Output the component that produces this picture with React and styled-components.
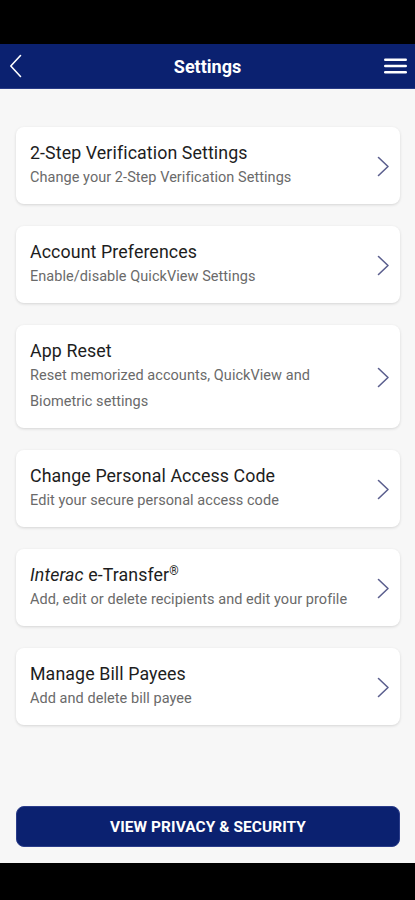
import React from "react";
import styled, { createGlobalStyle } from "styled-components";

const Global = createGlobalStyle`
  html, body { margin: 0; padding: 0; }
  body { font-family: Roboto, "Noto Sans", "Liberation Sans", sans-serif; background: #000; }
  * { box-sizing: border-box; }
`;

const NAVY = "#0b2170";

const Screen = styled.div`
  width: 415px;
  height: 900px;
  display: flex;
  flex-direction: column;
  background: #000;
  overflow: hidden;
`;

const SystemBar = styled.div`
  height: ${(p) => p.$h}px;
  flex: none;
  background: #000;
`;

const Header = styled.header`
  height: 45px;
  flex: none;
  background: ${NAVY};
  border-bottom: 1px solid #2a3c86;
  display: flex;
  align-items: center;
  justify-content: space-between;
  padding: 0 8px 0 8px;
  position: relative;
`;

const Title = styled.h1`
  margin: 0;
  position: absolute;
  left: 0;
  right: 0;
  text-align: center;
  color: #fff;
  font-size: 18px;
  font-weight: 700;
  pointer-events: none;
`;

const IconButton = styled.button`
  background: none;
  border: 0;
  padding: 0;
  display: flex;
  align-items: center;
  justify-content: center;
  width: ${(p) => p.$w}px;
  height: 30px;
  cursor: pointer;
`;

const Content = styled.main`
  flex: 1;
  background: #f7f7f7;
  display: flex;
  flex-direction: column;
  padding: 38px 15px 16px 16px;
`;

const List = styled.div`
  display: flex;
  flex-direction: column;
  gap: 22px;
`;

const Card = styled.div`
  background: #fff;
  border-radius: 8px;
  box-shadow: 0 1px 3px rgba(0, 0, 0, 0.14);
  display: flex;
  align-items: center;
  padding: 14px 10px 13px 14px;
  cursor: pointer;
`;

const CardText = styled.div`
  flex: 1;
  display: flex;
  flex-direction: column;
`;

const CardTitle = styled.div`
  font-size: 17.8px;
  line-height: 24px;
  color: #1d1d1d;
  font-weight: 400;
  letter-spacing: 0.1px;
`;

const CardSub = styled.div`
  font-size: 14.5px;
  line-height: 26px;
  color: #6a6a6a;
  letter-spacing: 0.05px;
  padding-right: ${(p) => (p.$wrap ? 40 : 0)}px;
`;

const Sup = styled.sup`
  font-size: 12px;
  line-height: 0;
  vertical-align: 6px;
`;

const Chevron = styled.svg`
  flex: none;
  width: 13px;
  height: 21px;
  margin-left: 8px;
`;

const PrimaryButton = styled.button`
  margin-top: auto;
  height: 41px;
  width: 100%;
  background: ${NAVY};
  color: #fff;
  border: 1px solid #2b3d8a;
  border-radius: 8px;
  font-family: Roboto, "Liberation Sans", sans-serif;
  font-size: 15.4px;
  font-weight: 700;
  letter-spacing: 0.1px;
  text-transform: uppercase;
`;

const ChevronRight = () => (
  <Chevron viewBox="0 0 13 21">
    <path d="M1.5 1.5 L11 10.5 L1.5 19.5" fill="none" stroke="#5b5f8e" strokeWidth="1.6" strokeLinecap="round" strokeLinejoin="round" />
  </Chevron>
);

const items = [
  { title: "2-Step Verification Settings", sub: "Change your 2-Step Verification Settings" },
  { title: "Account Preferences", sub: "Enable/disable QuickView Settings" },
  { title: "App Reset", sub: "Reset memorized accounts, QuickView and Biometric settings", wrap: true },
  { title: "Change Personal Access Code", sub: "Edit your secure personal access code" },
  {
    title: (
      <>
        <i>Interac</i> e-Transfer<Sup>®</Sup>
      </>
    ),
    sub: "Add, edit or delete recipients and edit your profile",
  },
  { title: "Manage Bill Payees", sub: "Add and delete bill payee" },
];

export default function App() {
  return (
    <Screen>
      <Global />
      <SystemBar $h={44} />
      <Header>
        <IconButton $w={14} aria-label="Back">
          <svg width="13" height="24" viewBox="0 0 13 24">
            <path d="M11.5 1.5 L1.8 12 L11.5 22.5" fill="none" stroke="#fff" strokeWidth="1.6" strokeLinecap="round" strokeLinejoin="round" />
          </svg>
        </IconButton>
        <Title>Settings</Title>
        <IconButton $w={24} aria-label="Menu">
          <svg width="23" height="16" viewBox="0 0 23 16">
            <rect x="0" y="0.5" width="23" height="2.6" rx="1.3" fill="#fff" />
            <rect x="0" y="6.7" width="23" height="2.6" rx="1.3" fill="#fff" />
            <rect x="0" y="12.9" width="23" height="2.6" rx="1.3" fill="#fff" />
          </svg>
        </IconButton>
      </Header>
      <Content>
        <List>
          {items.map((it, i) => (
            <Card key={i}>
              <CardText>
                <CardTitle>{it.title}</CardTitle>
                <CardSub $wrap={it.wrap}>{it.sub}</CardSub>
              </CardText>
              <ChevronRight />
            </Card>
          ))}
        </List>
        <PrimaryButton>View Privacy &amp; Security</PrimaryButton>
      </Content>
      <SystemBar $h={37} />
    </Screen>
  );
}
